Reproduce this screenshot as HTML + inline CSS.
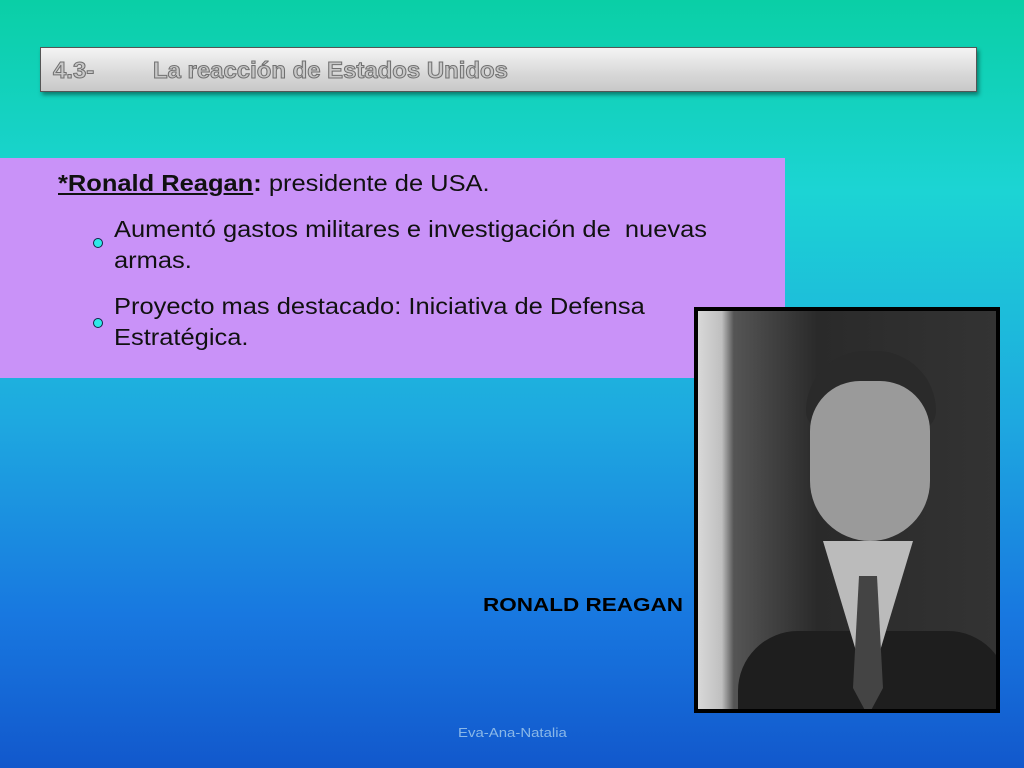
<!DOCTYPE html>
<html><head><style>
body{margin:0;width:1024px;height:768px;overflow:hidden;position:relative;font-family:"Liberation Sans",sans-serif;
background:linear-gradient(to bottom,#0acfa6 0%,#1cd4d4 25%,#1ea8e0 55%,#1878e0 80%,#1258cc 100%);}
.title{position:absolute;left:40px;top:47px;width:937px;height:45px;box-sizing:border-box;border:1px solid #555;
background:linear-gradient(#f4f4f4,#d8d8d8 60%,#c8c8c8);box-shadow:2px 3px 4px rgba(0,0,0,.4);}
.title span{position:absolute;top:9px;font-family:"Liberation Sans",sans-serif;font-weight:bold;font-size:23px;color:#c8c8c8;-webkit-text-stroke:1px #707070;transform:scaleX(1.04);transform-origin:left;}
.box{position:absolute;left:0;top:158px;width:785px;height:220px;background:#c992f8;}
.t{position:absolute;color:#111;font-size:23px;line-height:31px;transform:scaleX(1.107);transform-origin:left;white-space:nowrap;}
.b{position:absolute;width:8px;height:8px;border-radius:50%;background:#2ee8e8;border:1px solid #124;}
.photo{position:absolute;left:694px;top:307px;width:306px;height:406px;background:#000;}
.pi{position:absolute;left:4px;top:4px;width:298px;height:398px;background:linear-gradient(90deg,#d8d8d8 0%,#bfbfbf 8%,#555 12%,#2a2a2a 40%,#333 100%);overflow:hidden;}
</style></head><body>
<div class="title"><span style="left:12px">4.3-</span><span style="left:112px">La reacción de Estados Unidos</span></div>
<div class="box"></div>
<div class="t" style="left:58px;top:168px"><b style="text-decoration:underline">*Ronald Reagan</b><b>:</b> presidente de USA.</div>
<div class="b" style="left:93px;top:238px"></div>
<div class="t" style="left:114px;top:214px">Aumentó gastos militares e investigación de&nbsp; nuevas<br>armas.</div>
<div class="b" style="left:93px;top:318px"></div>
<div class="t" style="left:114px;top:291px">Proyecto mas destacado: Iniciativa de Defensa<br>Estratégica.</div>
<div style="position:absolute;left:483px;top:595px;font-weight:bold;font-size:18px;color:#000;transform:scaleX(1.25);transform-origin:left;white-space:nowrap">RONALD REAGAN</div>
<div class="photo"><div class="pi">
<div style="position:absolute;left:40px;top:320px;width:270px;height:120px;background:#1e1e1e;border-radius:60px 60px 0 0"></div>
<div style="position:absolute;left:108px;top:40px;width:130px;height:80px;background:#2a2a2a;border-radius:60px 60px 20px 20px"></div>
<div style="position:absolute;left:112px;top:70px;width:120px;height:160px;background:#9a9a9a;border-radius:50px 50px 60px 60px"></div>
<div style="position:absolute;left:125px;top:230px;width:90px;height:120px;background:#bbb;clip-path:polygon(0 0,100% 0,60% 100%,40% 100%)"></div>
<div style="position:absolute;left:155px;top:265px;width:30px;height:140px;background:#444;clip-path:polygon(20% 0,80% 0,100% 80%,50% 100%,0 80%)"></div>
</div></div>
<div style="position:absolute;left:458px;top:725px;font-size:13px;color:#8ab8e8;transform:scaleX(1.15);transform-origin:left;white-space:nowrap">Eva-Ana-Natalia</div>
</body></html>
